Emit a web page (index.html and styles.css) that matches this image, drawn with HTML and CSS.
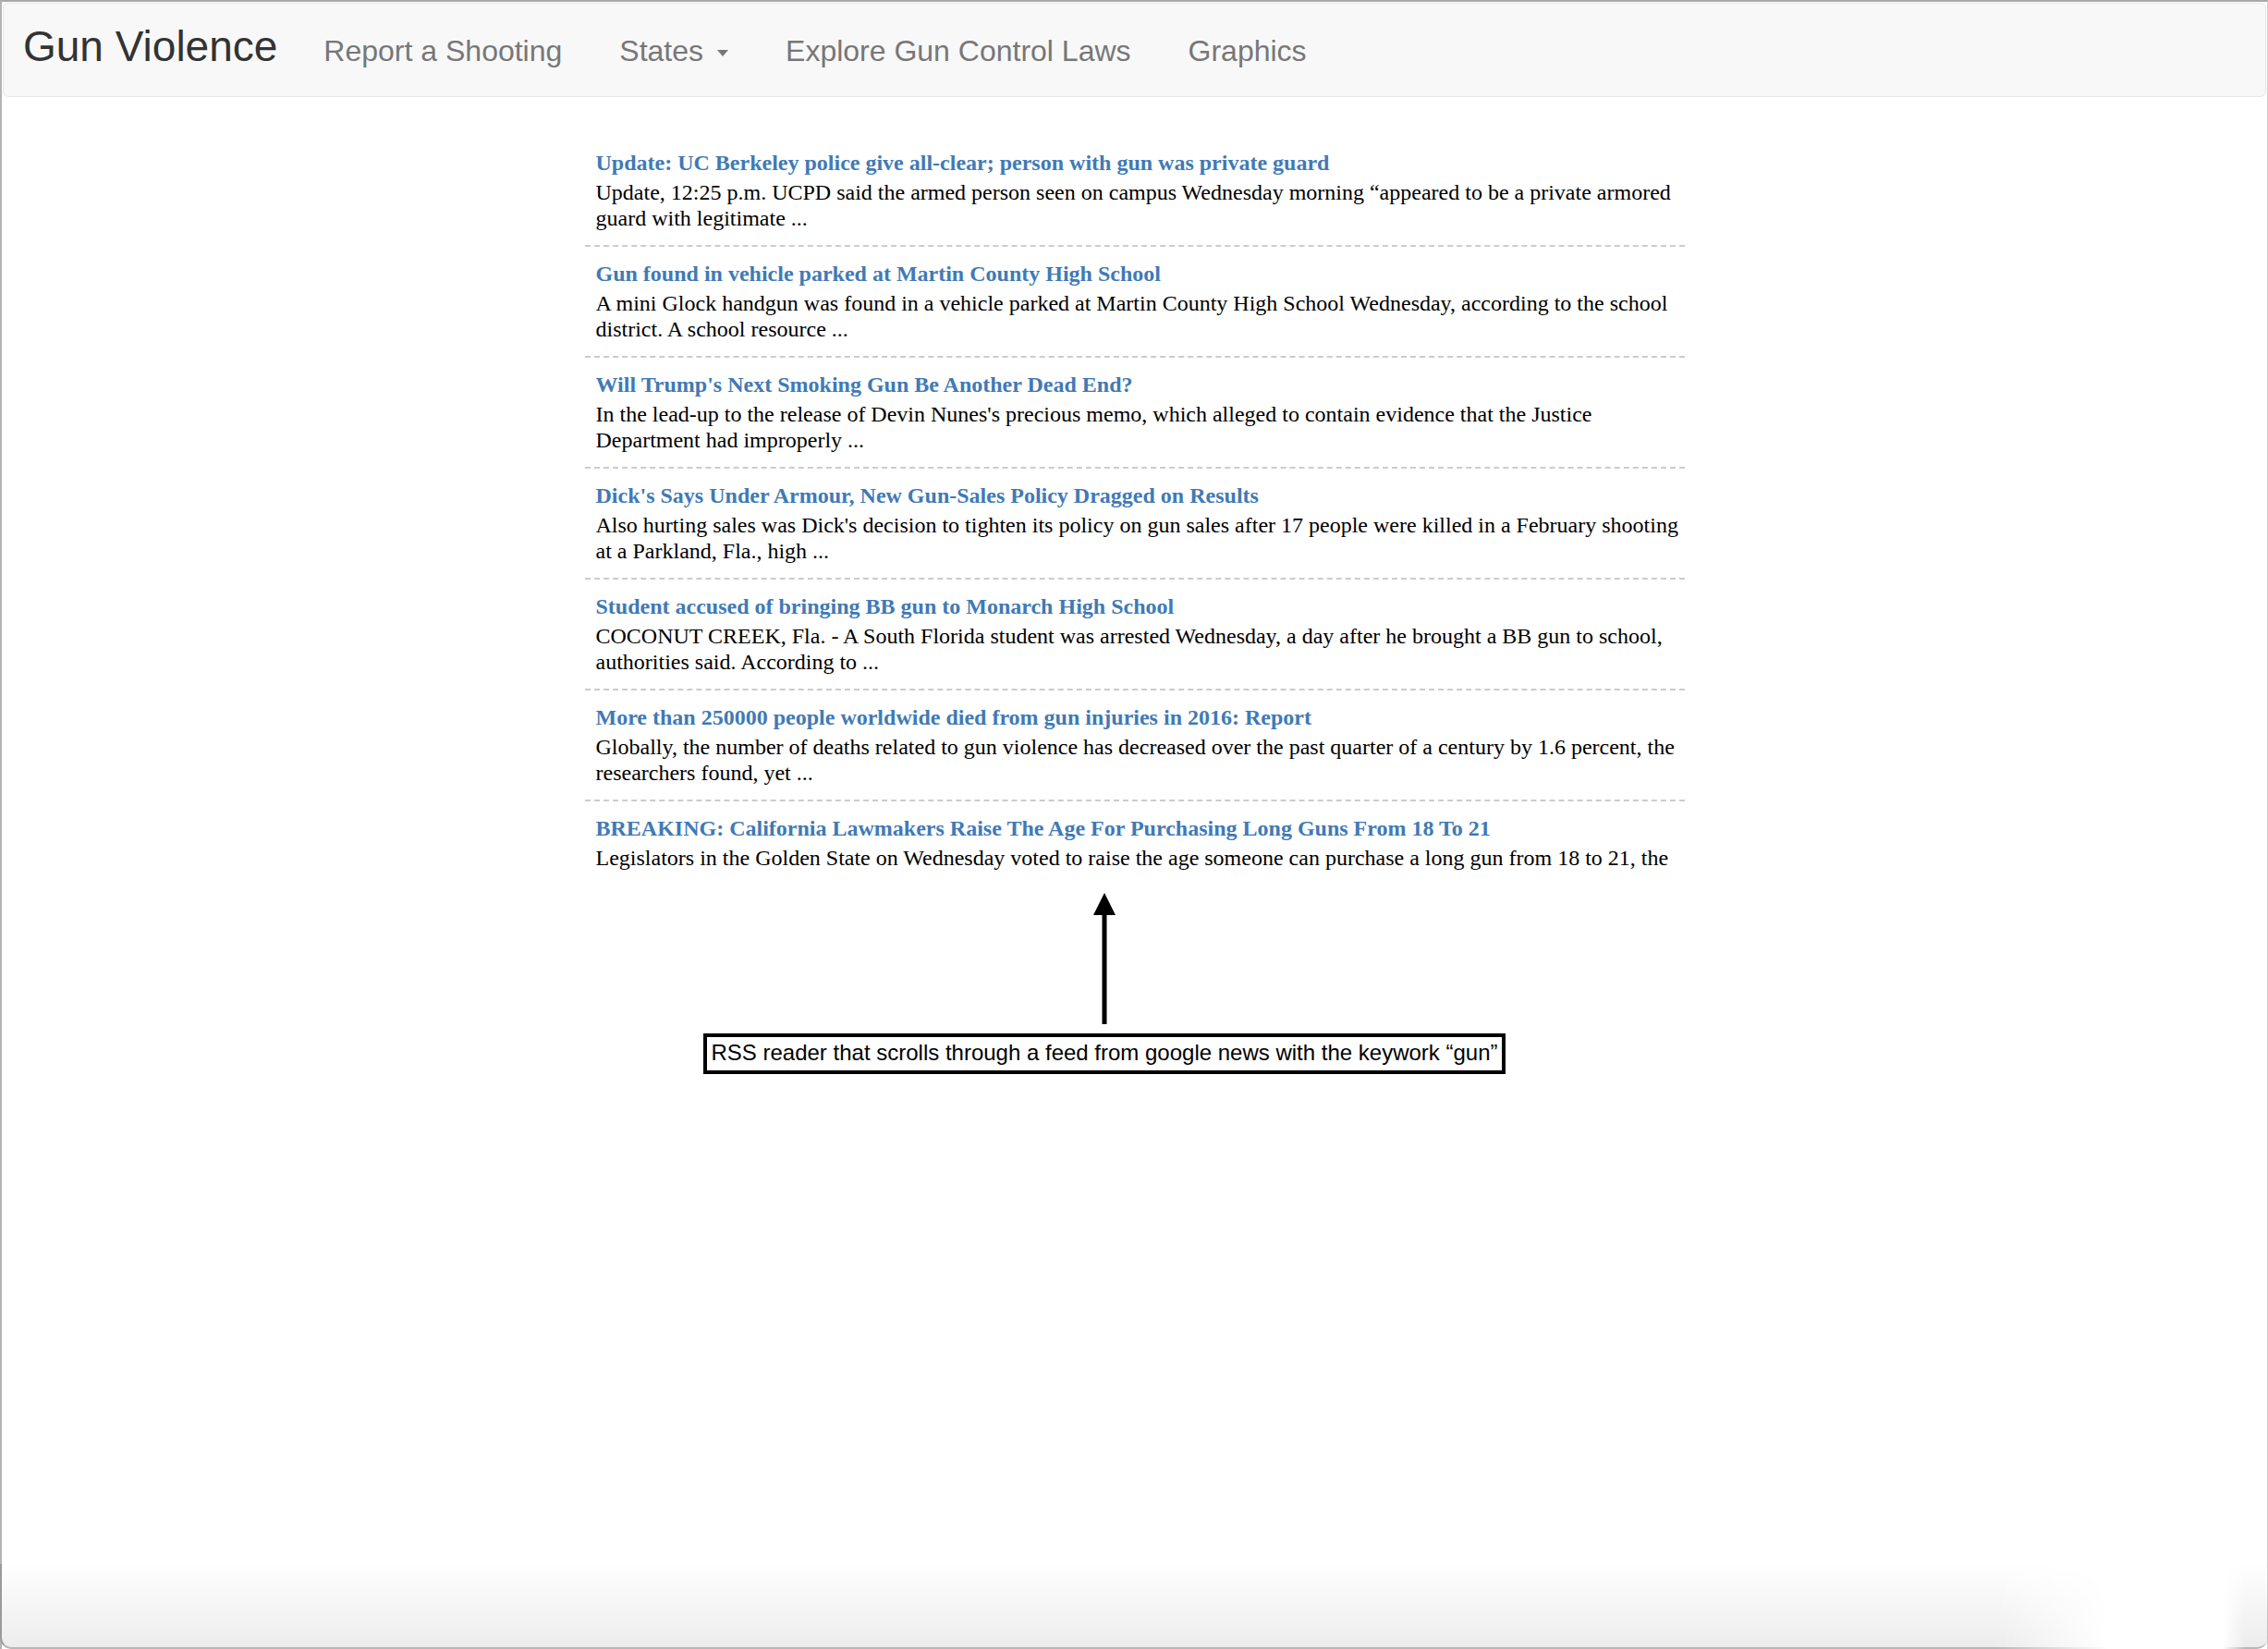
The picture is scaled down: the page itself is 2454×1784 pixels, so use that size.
FILE: index.html
```html
<!DOCTYPE html>
<html lang="en">
<head>
<meta charset="utf-8">
<title>Gun Violence</title>
<link rel="stylesheet" href="styles.css">
</head>
<body>
<nav class="navbar">
  <a class="brand" href="#">Gun Violence</a>
  <ul class="nav">
    <li><a href="#">Report a Shooting</a></li>
    <li><a href="#">States<span class="caret"></span></a></li>
    <li><a href="#">Explore Gun Control Laws</a></li>
    <li><a href="#">Graphics</a></li>
  </ul>
</nav>

<main class="feed">
  <div class="item">
    <a class="title" href="#">Update: UC Berkeley police give all-clear; person with gun was private guard</a>
    <p class="desc">Update, 12:25 p.m. UCPD said the armed person seen on campus Wednesday morning “appeared to be a private armored guard with legitimate ...</p>
  </div>
  <div class="item">
    <a class="title" href="#">Gun found in vehicle parked at Martin County High School</a>
    <p class="desc">A mini Glock handgun was found in a vehicle parked at Martin County High School Wednesday, according to the school district. A school resource ...</p>
  </div>
  <div class="item">
    <a class="title" href="#">Will Trump's Next Smoking Gun Be Another Dead End?</a>
    <p class="desc">In the lead-up to the release of Devin Nunes's precious memo, which alleged to contain evidence that the Justice Department had improperly ...</p>
  </div>
  <div class="item">
    <a class="title" href="#">Dick's Says Under Armour, New Gun-Sales Policy Dragged on Results</a>
    <p class="desc">Also hurting sales was Dick's decision to tighten its policy on gun sales after 17 people were killed in a February shooting at a Parkland, Fla., high ...</p>
  </div>
  <div class="item">
    <a class="title" href="#">Student accused of bringing BB gun to Monarch High School</a>
    <p class="desc">COCONUT CREEK, Fla. - A South Florida student was arrested Wednesday, a day after he brought a BB gun to school, authorities said. According to ...</p>
  </div>
  <div class="item">
    <a class="title" href="#">More than 250000 people worldwide died from gun injuries in 2016: Report</a>
    <p class="desc">Globally, the number of deaths related to gun violence has decreased over the past quarter of a century by 1.6 percent, the researchers found, yet ...</p>
  </div>
  <div class="item">
    <a class="title" href="#">BREAKING: California Lawmakers Raise The Age For Purchasing Long Guns From 18 To 21</a>
    <p class="desc">Legislators in the Golden State on Wednesday voted to raise the age someone can purchase a long gun from 18 to 21, the bill's author said ...</p>
  </div>
</main>

<div class="annotation">
  <svg class="arrow" width="26" height="142" viewBox="0 0 26 142" aria-hidden="true">
    <polygon points="13,0 25,24 1,24" fill="#000"/>
    <rect x="10.5" y="20" width="5" height="122" fill="#000"/>
  </svg>
  <div class="note">RSS reader that scrolls through a feed from google news with the keywork “gun”</div>
</div>

<div class="window-bottom"></div>
</body>
</html>
```

FILE: styles.css
```css
html {
  height: 100%;
}

body {
  margin: 0;
  min-height: 100%;
  box-sizing: border-box;
  background: #fff;
  border-top: 2px solid #a9a9a9;
  border-left: 2px solid #b4b4b4;
  border-right: 1px solid #cfcfcf;
  font-family: "Liberation Sans", Arial, sans-serif;
  overflow: hidden;
}

/* ---------- navbar ---------- */
.navbar {
  display: flex;
  align-items: baseline;
  margin: 1px 1px 0 1px;
  padding: 19px 0 27px;
  background: #f8f8f8;
  border: 1px solid #e7e7e7;
  border-radius: 6px;
}

.brand {
  padding: 0 19px 0 21px;
  font-size: 46px;
  color: #333;
  text-decoration: none;
}

.nav {
  display: flex;
  align-items: baseline;
  margin: 0;
  padding: 0;
  list-style: none;
}

.nav a {
  display: block;
  padding: 0 31px;
  font-size: 32px;
  color: #777;
  text-decoration: none;
}

.caret {
  display: inline-block;
  width: 0;
  height: 0;
  margin-left: 15px;
  vertical-align: middle;
  border-top: 7px solid #777;
  border-left: 6px solid transparent;
  border-right: 6px solid transparent;
}

/* ---------- feed ---------- */
.feed {
  width: 1190px;
  height: 797px;
  margin: 42px auto 0;
  overflow: hidden;
  font-family: "Liberation Serif", "Times New Roman", serif;
  font-size: 24px;
  line-height: 28px;
}

.item {
  padding: 15px 4px 15px 12px;
  border-bottom: 2px dashed #cccccc;
}

.title {
  display: block;
  margin-bottom: 4px;
  font-weight: bold;
  color: #3f7ab6;
  text-decoration: none;
}

.desc {
  margin: 0;
  color: #000;
}

/* ---------- annotation overlay ---------- */
.annotation {
  position: absolute;
  left: 762px;
  top: 966px;
  width: 866px;
  display: flex;
  flex-direction: column;
  align-items: center;
}

.arrow {
  display: block;
}

.note {
  margin-top: 10px;
  padding: 0 4px 2px;
  border: 4px solid #000;
  background: #fff;
  font-family: "Liberation Sans", Arial, sans-serif;
  font-size: 24px;
  line-height: 34px;
  color: #000;
  white-space: nowrap;
}

/* ---------- window chrome at bottom ---------- */
.window-bottom {
  position: fixed;
  left: 0;
  right: 0;
  bottom: 0;
  height: 90px;
  border-left: 2px solid #9a9a9a;
  border-bottom: 2px solid #b8b8b8;
  border-radius: 0 0 12px 12px;
  background: linear-gradient(to bottom, rgba(0, 0, 0, 0), rgba(0, 0, 0, 0.075));
  -webkit-mask-image: linear-gradient(to right, #000 88%, transparent 93%, transparent 98%, #000 99%);
  mask-image: linear-gradient(to right, #000 88%, transparent 93%, transparent 98%, #000 99%);
  pointer-events: none;
}
```
